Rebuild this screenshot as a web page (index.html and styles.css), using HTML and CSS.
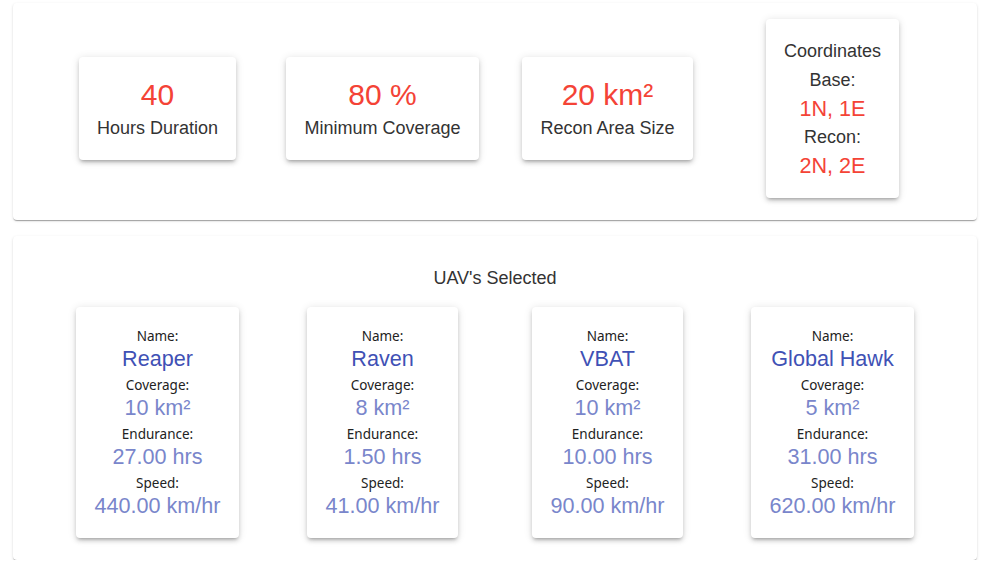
FILE: index.html
```html
<!DOCTYPE html>
<html>
<head>
<meta charset="utf-8">
<link rel="stylesheet" href="styles.css">
</head>
<body>
<div class="page">
  <section class="paper paper-top">
    <div class="grid">
      <div class="cell"><div class="card stat"><div class="big red">40</div><div class="caption">Hours Duration</div></div></div>
      <div class="cell"><div class="card stat"><div class="big red">80 %</div><div class="caption">Minimum Coverage</div></div></div>
      <div class="cell"><div class="card stat"><div class="big red">20 km²</div><div class="caption">Recon Area Size</div></div></div>
      <div class="cell"><div class="card coord">
        <div class="caption">Coordinates</div>
        <div class="caption">Base:</div>
        <div class="mid red">1N, 1E</div>
        <div class="caption">Recon:</div>
        <div class="mid red">2N, 2E</div>
      </div></div>
    </div>
  </section>
  <section class="paper paper-bottom">
    <div class="title">UAV's Selected</div>
    <div class="grid">
      <div class="cell"><div class="card uav">
        <div class="label">Name:</div><div class="value name">Reaper</div>
        <div class="label">Coverage:</div><div class="value">10 km²</div>
        <div class="label">Endurance:</div><div class="value">27.00 hrs</div>
        <div class="label">Speed:</div><div class="value">440.00 km/hr</div>
      </div></div>
      <div class="cell"><div class="card uav">
        <div class="label">Name:</div><div class="value name">Raven</div>
        <div class="label">Coverage:</div><div class="value">8 km²</div>
        <div class="label">Endurance:</div><div class="value">1.50 hrs</div>
        <div class="label">Speed:</div><div class="value">41.00 km/hr</div>
      </div></div>
      <div class="cell"><div class="card uav">
        <div class="label">Name:</div><div class="value name">VBAT</div>
        <div class="label">Coverage:</div><div class="value">10 km²</div>
        <div class="label">Endurance:</div><div class="value">10.00 hrs</div>
        <div class="label">Speed:</div><div class="value">90.00 km/hr</div>
      </div></div>
      <div class="cell"><div class="card uav">
        <div class="label">Name:</div><div class="value name">Global Hawk</div>
        <div class="label">Coverage:</div><div class="value">5 km²</div>
        <div class="label">Endurance:</div><div class="value">31.00 hrs</div>
        <div class="label">Speed:</div><div class="value">620.00 km/hr</div>
      </div></div>
    </div>
  </section>
</div>
</body>
</html>
```

FILE: styles.css
```css
html, body {
  margin: 0;
  padding: 0;
  background: #ffffff;
}
body {
  font-family: "Liberation Sans", Arial, sans-serif;
  color: #333333;
}
.page {
  width: 964px;
  padding: 3px 0 0 13px;
  display: flex;
  flex-direction: column;
  gap: 16px;
}
.paper {
  background: #fff;
  border-radius: 4px;
  box-shadow: 0 2px 1px -1px rgba(0,0,0,0.2), 0 1px 1px 0 rgba(0,0,0,0.14), 0 1px 3px 0 rgba(0,0,0,0.12);
}
.paper-top {
  padding: 16px 0 22px;
}
.paper-bottom {
  padding: 29px 0 22px;
}
.grid {
  width: 900px;
  margin: 0 auto;
  display: grid;
  grid-template-columns: repeat(4, 1fr);
  align-items: center;
}
.paper-bottom .grid {
  align-items: start;
}
.cell {
  display: flex;
  justify-content: center;
}
.card {
  background: #fff;
  border-radius: 4px;
  box-shadow: 0 3px 3px -2px rgba(0,0,0,0.2), 0 3px 4px 0 rgba(0,0,0,0.14), 0 1px 8px 0 rgba(0,0,0,0.12);
  text-align: center;
  padding-left: 18px;
  padding-right: 18px;
}
.red { color: #f44336; }
.stat {
  padding-top: 20px;
  padding-bottom: 17px;
}
.big {
  font-size: 30px;
  line-height: 36px;
}
.caption {
  font-size: 18px;
  line-height: 30px;
}
.coord {
  padding-top: 18px;
  padding-bottom: 17px;
}
.coord .caption, .coord .mid {
  line-height: 28.8px;
}
.mid {
  font-size: 21.6px;
}
.title {
  text-align: center;
  font-size: 18px;
  line-height: 27px;
  margin-bottom: 15px;
}
.uav {
  padding-top: 19px;
  padding-bottom: 16px;
}
.label {
  font-family: "Noto Sans", "Open Sans", sans-serif;
  font-size: 13.5px;
  line-height: 21px;
  color: #222;
}
.value {
  font-size: 21.6px;
  line-height: 23px;
  margin-bottom: 5px;
  color: #7986cb;
}
.value.name {
  color: #3f51b5;
}
```
